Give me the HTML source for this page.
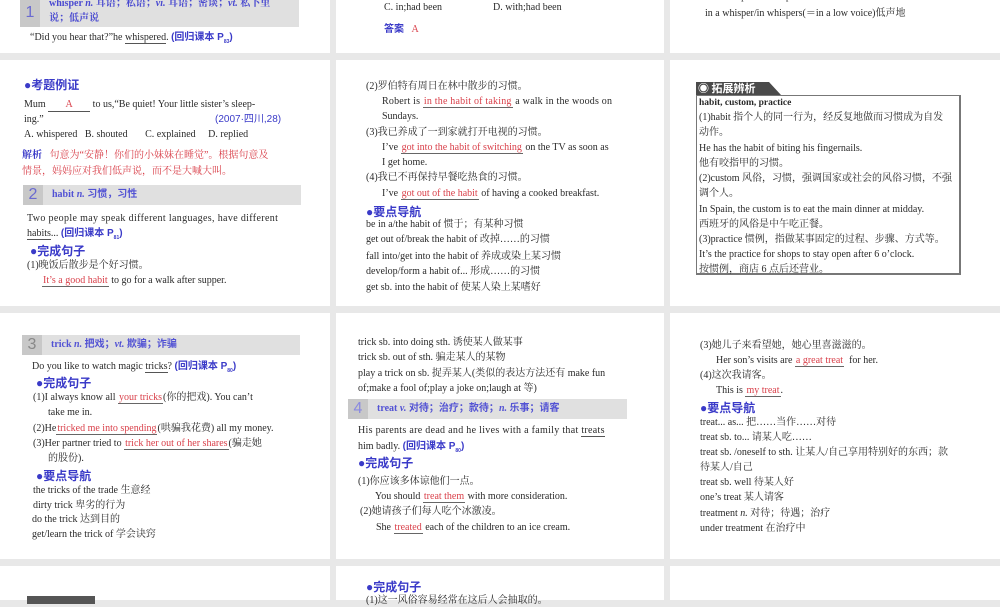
<!DOCTYPE html>
<html><head><meta charset="utf-8"><style>
*{margin:0;padding:0}
body{width:1000px;height:600px;background:#e8e8e8;position:relative;overflow:hidden}
.p{position:absolute;background:#fff}
.t{position:absolute;white-space:nowrap;font:10px/12px "Liberation Serif","Noto Serif CJK SC",serif;color:#2a2a2a}
.b{color:#3a3ac8;font-family:"Liberation Sans","Noto Sans CJK SC",sans-serif;font-weight:bold}
.h{color:#3a3ac8;font:bold 12px/14px "Liberation Sans","Noto Sans CJK SC",sans-serif}
.r{color:#d9404a}
.ru{color:#d9404a;border-bottom:1px solid #666;padding:0 1px}
.u{border-bottom:1px solid #555}
.hd{position:absolute;background:#e0e0e0}
.hd>i{position:absolute;left:0;top:0;bottom:0;width:20px;background:#c8c8c8;font:16px/20px "Liberation Sans",sans-serif;color:#6a6ad0;text-align:center;font-style:normal}
.hd>span{position:absolute;left:29px;white-space:nowrap;font:bold 10px/20px "Liberation Serif","Noto Sans CJK SC",serif;color:#5252d4}
.hd>span i{font-style:italic}
</style></head><body>
<div class="p" style="left:0;top:0;width:330px;height:53px"></div>
<div class="p" style="left:336px;top:0;width:328px;height:53px"></div>
<div class="p" style="left:670px;top:0;width:330px;height:53px"></div>
<div class="p" style="left:0;top:60px;width:330px;height:246px"></div>
<div class="p" style="left:336px;top:60px;width:328px;height:246px"></div>
<div class="p" style="left:670px;top:60px;width:330px;height:246px"></div>
<div class="p" style="left:0;top:313px;width:330px;height:246px"></div>
<div class="p" style="left:336px;top:313px;width:328px;height:246px"></div>
<div class="p" style="left:670px;top:313px;width:330px;height:246px"></div>
<div class="p" style="left:0;top:566px;width:330px;height:34px"></div>
<div class="p" style="left:336px;top:566px;width:328px;height:34px"></div>
<div class="p" style="left:670px;top:566px;width:330px;height:34px"></div>

<!-- col1 row1 -->
<div class="hd" style="left:20px;top:-2px;width:279px;height:29px"><i style="line-height:29px">1</i></div>
<div class="t" style="left:49px;top:-2px;color:#4a4ad0;font-weight:bold">whisper <i>n.</i> 耳语；私语；<i>vi.</i> 耳语；密谈；<i>vt.</i> 私下里</div>
<div class="t" style="left:49px;top:13px;color:#4a4ad0;font-weight:bold">说；低声说</div>
<div class="t" style="left:30px;top:32px">“Did you hear that?”he <span class="u">whispered</span>. <span class="b">(回归课本 P<sub style="font-size:5px">83</sub>)</span></div>

<!-- col1 row2 -->
<div class="t h" style="left:24px;top:78px">●考题例证</div>
<div class="t" style="left:24px;top:99px">Mum <span style="display:inline-block;width:42px;border-bottom:1px solid #555;text-align:center" class="r">A</span> to us,“Be quiet! Your little sister’s sleep-</div>
<div class="t" style="left:24px;top:114px">ing.”</div>
<div class="t b" style="left:215px;top:114px;font-weight:normal">(2007·四川,28)</div>
<div class="t" style="left:24px;top:129px">A. whispered &nbsp; B. shouted &nbsp; &nbsp; &nbsp; C. explained &nbsp; &nbsp; D. replied</div>
<div class="t r" style="left:22px;top:150px"><b style="color:#3a3ac8">解析</b> &nbsp; 句意为“安静！你们的小妹妹在睡觉”。根据句意及</div>
<div class="t r" style="left:22px;top:166px">情景，妈妈应对我们低声说，而不是大喊大叫。</div>
<div class="hd" style="left:23px;top:185px;width:278px;height:20px"><i>2</i><span>habit <i>n.</i> 习惯，习性</span></div>
<div class="t" style="left:27px;top:213px;letter-spacing:.35px">Two people may speak different languages, have different</div>
<div class="t" style="left:27px;top:228px"><span class="u">habits</span>... <span class="b">(回归课本 P<sub style="font-size:5px">81</sub>)</span></div>
<div class="t h" style="left:30px;top:244px">●完成句子</div>
<div class="t" style="left:27px;top:260px">(1)晚饭后散步是个好习惯。</div>
<div class="t" style="left:42px;top:275px"><span class="ru">It’s a good habit</span> to go for a walk after supper.</div>

<!-- col2 row1 -->
<div class="t" style="left:384px;top:2px">C. in;had been</div>
<div class="t" style="left:493px;top:2px">D. with;had been</div>
<div class="t" style="left:384px;top:24px"><span class="b">答案</span> &nbsp; <span class="r">A</span></div>

<!-- col2 row2 -->
<div class="t" style="left:366px;top:81px">(2)罗伯特有周日在林中散步的习惯。</div>
<div class="t" style="left:382px;top:96px;letter-spacing:.2px">Robert is <span class="ru">in the habit of taking</span> a walk in the woods on</div>
<div class="t" style="left:382px;top:111px">Sundays.</div>
<div class="t" style="left:366px;top:127px">(3)我已养成了一到家就打开电视的习惯。</div>
<div class="t" style="left:382px;top:142px">I’ve <span class="ru">got into the habit of switching</span> on the TV as soon as</div>
<div class="t" style="left:382px;top:157px">I get home.</div>
<div class="t" style="left:366px;top:172px">(4)我已不再保持早餐吃热食的习惯。</div>
<div class="t" style="left:382px;top:188px">I’ve <span class="ru">got out of the habit</span> of having a cooked breakfast.</div>
<div class="t h" style="left:366px;top:205px">●要点导航</div>
<div class="t" style="left:366px;top:219px">be in a/the habit of 惯于；有某种习惯</div>
<div class="t" style="left:366px;top:234px">get out of/break the habit of 改掉……的习惯</div>
<div class="t" style="left:366px;top:251px">fall into/get into the habit of 养成或染上某习惯</div>
<div class="t" style="left:366px;top:266px">develop/form a habit of... 形成……的习惯</div>
<div class="t" style="left:366px;top:282px">get sb. into the habit of 使某人染上某嗜好</div>

<!-- col3 row1 -->
<div class="t" style="left:705px;top:-9px">in a whisper/in whispers 耳语</div>
<div class="t" style="left:705px;top:8px">in a whisper/in whispers(＝in a low voice)低声地</div>

<!-- col3 row2 -->
<div style="position:absolute;left:696px;top:82px;width:73px;height:13px;background:#4a4a4a"></div>
<div style="position:absolute;left:769px;top:82px;width:0;height:0;border-left:12px solid #4a4a4a;border-top:13px solid transparent"></div>
<div class="t" style="left:698px;top:82px;font:bold 11px/13px 'Noto Sans CJK SC',sans-serif;color:#fff">◉ 拓展辨析</div>
<div style="position:absolute;left:696px;top:95px;width:265px;height:180px;border:1px solid #777;border-right-width:2px;border-bottom-width:2px;box-sizing:border-box"></div>
<div class="t" style="left:699px;top:97px;font-weight:bold;font-size:9.5px">habit, custom, practice</div>
<div class="t" style="left:699px;top:112px">(1)habit 指个人的同一行为，经反复地做而习惯成为自发</div>
<div class="t" style="left:699px;top:127px">动作。</div>
<div class="t" style="left:699px;top:143px">He has the habit of biting his fingernails.</div>
<div class="t" style="left:699px;top:158px">他有咬指甲的习惯。</div>
<div class="t" style="left:699px;top:173px">(2)custom 风俗，习惯，强调国家或社会的风俗习惯，不强</div>
<div class="t" style="left:699px;top:188px">调个人。</div>
<div class="t" style="left:699px;top:204px">In Spain, the custom is to eat the main dinner at midday.</div>
<div class="t" style="left:699px;top:219px">西班牙的风俗是中午吃正餐。</div>
<div class="t" style="left:699px;top:234px">(3)practice 惯例，指做某事固定的过程、步骤、方式等。</div>
<div class="t" style="left:699px;top:249px">It’s the practice for shops to stay open after 6 o’clock.</div>
<div class="t" style="left:699px;top:264px">按惯例，商店 6 点后还营业。</div>

<!-- col1 row3 -->
<div class="hd" style="left:22px;top:335px;width:278px;height:20px"><i style="color:#888">3</i><span>trick <i>n.</i> 把戏；<i>vt.</i> 欺骗；诈骗</span></div>
<div class="t" style="left:32px;top:361px">Do you like to watch magic <span class="u">tricks</span>? <span class="b">(回归课本 P<sub style="font-size:5px">80</sub>)</span></div>
<div class="t h" style="left:36px;top:376px">●完成句子</div>
<div class="t" style="left:33px;top:392px">(1)I always know all <span class="ru">your tricks</span>(你的把戏). You can’t</div>
<div class="t" style="left:48px;top:407px">take me in.</div>
<div class="t" style="left:33px;top:423px">(2)He<span class="ru">tricked me into spending</span>(哄骗我花费) all my money.</div>
<div class="t" style="left:33px;top:438px">(3)Her partner tried to <span class="ru">trick her out of her shares</span>(骗走她</div>
<div class="t" style="left:48px;top:453px">的股份).</div>
<div class="t h" style="left:36px;top:469px">●要点导航</div>
<div class="t" style="left:33px;top:485px">the tricks of the trade 生意经</div>
<div class="t" style="left:33px;top:500px">dirty trick 卑劣的行为</div>
<div class="t" style="left:32px;top:514px">do the trick 达到目的</div>
<div class="t" style="left:32px;top:529px">get/learn the trick of 学会诀窍</div>

<!-- col2 row3 -->
<div class="t" style="left:358px;top:337px">trick sb. into doing sth. 诱使某人做某事</div>
<div class="t" style="left:358px;top:352px">trick sb. out of sth. 骗走某人的某物</div>
<div class="t" style="left:358px;top:368px">play a trick on sb. 捉弄某人(类似的表达方法还有 make fun</div>
<div class="t" style="left:358px;top:383px">of;make a fool of;play a joke on;laugh at 等)</div>
<div class="hd" style="left:348px;top:399px;width:279px;height:20px"><i style="color:#8a8ae0">4</i><span>treat <i>v.</i> 对待；治疗；款待；<i>n.</i> 乐事；请客</span></div>
<div class="t" style="left:358px;top:425px;letter-spacing:.3px">His parents are dead and he lives with a family that <span class="u">treats</span></div>
<div class="t" style="left:358px;top:441px">him badly. <span class="b">(回归课本 P<sub style="font-size:5px">80</sub>)</span></div>
<div class="t h" style="left:358px;top:456px">●完成句子</div>
<div class="t" style="left:358px;top:476px">(1)你应该多体谅他们一点。</div>
<div class="t" style="left:375px;top:491px">You should <span class="ru">treat them</span> with more consideration.</div>
<div class="t" style="left:360px;top:506px">(2)她请孩子们每人吃个冰激凌。</div>
<div class="t" style="left:376px;top:522px">She <span class="ru">treated</span> each of the children to an ice cream.</div>

<!-- col3 row3 -->
<div class="t" style="left:700px;top:340px">(3)她儿子来看望她，她心里喜滋滋的。</div>
<div class="t" style="left:716px;top:355px">Her son’s visits are <span class="ru">a great treat</span> &nbsp;for her.</div>
<div class="t" style="left:700px;top:370px">(4)这次我请客。</div>
<div class="t" style="left:716px;top:385px">This is <span class="ru">my treat</span>.</div>
<div class="t h" style="left:700px;top:401px">●要点导航</div>
<div class="t" style="left:700px;top:417px">treat... as... 把……当作……对待</div>
<div class="t" style="left:700px;top:432px">treat sb. to... 请某人吃……</div>
<div class="t" style="left:700px;top:447px">treat sb. /oneself to sth. 让某人/自己享用特别好的东西；款</div>
<div class="t" style="left:700px;top:462px">待某人/自己</div>
<div class="t" style="left:700px;top:477px">treat sb. well 待某人好</div>
<div class="t" style="left:700px;top:492px">one’s treat 某人请客</div>
<div class="t" style="left:700px;top:508px">treatment <i>n.</i> 对待；待遇；治疗</div>
<div class="t" style="left:700px;top:523px">under treatment 在治疗中</div>

<!-- row4 -->
<div style="position:absolute;left:27px;top:596px;width:68px;height:8px;background:#555"></div>
<div class="t h" style="left:366px;top:580px">●完成句子</div>
<div class="t" style="left:366px;top:595px">(1)这一风俗容易经常在这后人会抽取的。</div>
</body></html>
